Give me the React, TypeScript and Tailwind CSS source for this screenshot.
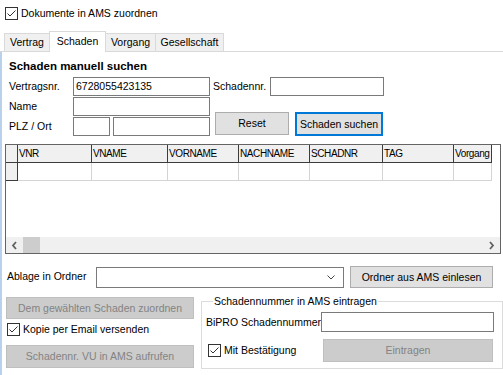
import React from "react";

const columns = [
  { name: "VNR", w: "w-[74px]" },
  { name: "VNAME", w: "w-[76px]" },
  { name: "VORNAME", w: "w-[71px]" },
  { name: "NACHNAME", w: "w-[71px]" },
  { name: "SCHADNR", w: "w-[73px]" },
  { name: "TAG", w: "w-[71px]" },
  { name: "Vorgang", w: "w-[38px]" },
];

const CheckBox = () => (
  <div className="w-[13px] h-[13px] border border-[#333333] bg-white shrink-0 flex items-center justify-center">
    <svg width="11" height="11" viewBox="0 0 11 11">
      <polyline points="1.5,5.5 4,8 9.5,2.5" fill="none" stroke="#333333" strokeWidth="1" />
    </svg>
  </div>
);

const Input = ({ className = "", value = "" }: { className?: string; value?: string }) => (
  <div className={`border border-[#7a7a7a] bg-white flex items-center px-[2px] ${className}`}>
    {value}
  </div>
);

const Button = ({
  children,
  className = "",
  disabled = false,
  focused = false,
}: {
  children: React.ReactNode;
  className?: string;
  disabled?: boolean;
  focused?: boolean;
}) => (
  <div
    className={`flex items-center justify-center shrink-0 whitespace-nowrap ${
      disabled
        ? "bg-[#cccccc] border border-[#bfbfbf] text-[#838383]"
        : focused
        ? "bg-[#e1e1e1] border-2 border-[#0078d7]"
        : "bg-[#e1e1e1] border border-[#adadad]"
    } ${className}`}
  >
    {children}
  </div>
);

const Tab = ({ label, selected, className = "" }: { label: string; selected?: boolean; className?: string }) => (
  <div
    className={`flex items-center justify-center border-t border-l border-r border-[#d9d9d9] ${
      selected ? "h-[21px] bg-white relative z-10 mb-[-1px] pb-[2px]" : "h-[18px] bg-[#f0f0f0]"
    } ${className}`}
  >
    {label}
  </div>
);

export default function App() {
  return (
    <div className="w-[503px] h-[375px] bg-white flex flex-col overflow-hidden whitespace-nowrap font-['Liberation_Sans',Arial,sans-serif] text-[10.5px] text-black leading-[13px]">
      {/* top checkbox */}
      <div className="mt-[7px] ml-[5px] flex items-center gap-[3px] h-[13px]">
        <CheckBox />
        <span>Dokumente in AMS zuordnen</span>
      </div>

      {/* tabs */}
      <div className="mt-[11px] h-[20px] flex items-end pl-[4px]">
        <Tab label="Vertrag" className="w-[46px]" />
        <Tab label="Schaden" selected className="w-[57px] -ml-px" />
        <Tab label="Vorgang" className="w-[51px] -ml-px" />
        <Tab label="Gesellschaft" className="w-[69px] -ml-px" />
      </div>

      {/* tab page */}
      <div className="flex-1 border-t border-[#d9d9d9] flex">
        <div className="w-[2px] bg-[#b9d1ea] shrink-0" />
        <div className="flex-1 flex flex-col">
          <div className="mt-[8px] ml-[7px] h-[13px] font-bold text-[11.5px]">Schaden manuell suchen</div>

          {/* search form */}
          <div className="mt-[4px] flex">
            <div className="ml-[7px] flex flex-col gap-[1px]">
              <div className="flex items-center h-[19px]">
                <span className="w-[64px]">Vertragsnr.</span>
                <Input className="w-[137px] h-[19px]" value="6728055423135" />
              </div>
              <div className="flex items-center h-[19px]">
                <span className="w-[64px]">Name</span>
                <Input className="w-[137px] h-[19px]" />
              </div>
              <div className="flex items-center h-[19px]">
                <span className="w-[64px]">PLZ / Ort</span>
                <Input className="w-[37px] h-[19px]" />
                <Input className="w-[97px] h-[19px] ml-[3px]" />
              </div>
            </div>
            <div className="ml-[3px] flex flex-col">
              <div className="flex items-center h-[19px]">
                <span className="w-[57px]">Schadennr.</span>
                <Input className="w-[114px] h-[19px]" />
              </div>
              <div className="mt-[16px] flex">
                <Button className="ml-[2px] w-[74px] h-[23px]">Reset</Button>
                <Button focused className="ml-[6px] w-[88px] h-[24px]">
                  Schaden suchen
                </Button>
              </div>
            </div>
          </div>

          {/* grid */}
          <div className="mt-[8px] ml-[3px] w-[496px] h-[110px] border border-[#646464] flex flex-col">
            <div className="flex h-[18px] shrink-0">
              <div className="w-[12px] bg-[#f0f0f0] border-r border-b border-[#3c3c3c]" />
              {columns.map((c) => (
                <div
                  key={c.name}
                  className={`${c.w} bg-[#f0f0f0] border-r border-b border-[#3c3c3c] flex items-center pl-[1px] overflow-hidden text-[10px] tracking-[-0.4px]`}
                >
                  {c.name}
                </div>
              ))}
            </div>
            <div className="flex h-[18px] shrink-0">
              <div className="w-[12px] bg-[#f0f0f0] border-r border-b border-[#3c3c3c]" />
              {columns.map((c) => (
                <div key={c.name} className={`${c.w} border-r border-b border-[#d4d4d4]`} />
              ))}
            </div>
            <div className="flex-1" />
            <div className="h-[16px] bg-[#f0f0f0] flex items-center shrink-0">
              <div className="w-[17px] h-full flex items-center justify-center">
                <svg width="7" height="9" viewBox="0 0 7 9">
                  <polyline points="5,1 2,4.5 5,8" fill="none" stroke="#606060" strokeWidth="1.8" />
                </svg>
              </div>
              <div className="w-[17px] h-full bg-[#cdcdcd]" />
              <div className="flex-1" />
              <div className="w-[17px] h-full flex items-center justify-center">
                <svg width="7" height="9" viewBox="0 0 7 9">
                  <polyline points="2,1 5,4.5 2,8" fill="none" stroke="#606060" strokeWidth="1.8" />
                </svg>
              </div>
            </div>
          </div>

          {/* ablage */}
          <div className="mt-[12px] flex items-start h-[22px]">
            <span className="ml-[5px] w-[89px] mt-[4px]">Ablage in Ordner</span>
            <div className="mt-[1px] w-[248px] h-[21px] border border-[#7a7a7a] bg-white flex items-center justify-end pr-[8px]">
              <svg width="8" height="5" viewBox="0 0 8 5">
                <polyline points="0.5,0.5 4,4 7.5,0.5" fill="none" stroke="#444444" strokeWidth="1" />
              </svg>
            </div>
            <Button className="ml-[6px] w-[143px] h-[22px]">Ordner aus AMS einlesen</Button>
          </div>

          {/* bottom */}
          <div className="mt-[9px] flex items-start">
            <div className="ml-[4px] w-[188px] flex flex-col">
              <Button disabled className="w-full h-[22px]">
                Dem gewählten Schaden zuordnen
              </Button>
              <div className="mt-[4px] ml-[1px] h-[13px] flex items-center gap-[3px]">
                <CheckBox />
                <span>Kopie per Email versenden</span>
              </div>
              <Button disabled className="mt-[9px] w-full h-[23px]">
                Schadennr. VU in AMS aufrufen
              </Button>
            </div>

            <div className="ml-[7px] mt-[4px] w-[302px] h-[68px] border border-[#dcdcdc] relative flex flex-col">
              <span className="absolute -top-[7px] left-[11px] bg-white px-[1px]">Schadennummer in AMS eintragen</span>
              <div className="mt-[10px] flex items-center">
                <span className="pl-[4px] w-[119px]">BiPRO Schadennummer</span>
                <Input className="w-[173px] h-[20px]" />
              </div>
              <div className="mt-[7px] flex items-center h-[23px]">
                <div className="w-[121px] pl-[6px] flex items-center gap-[3px]">
                  <CheckBox />
                  <span>Mit Bestätigung</span>
                </div>
                <Button disabled className="w-[170px] h-[23px]">
                  Eintragen
                </Button>
              </div>
            </div>
          </div>
        </div>
      </div>
    </div>
  );
}
